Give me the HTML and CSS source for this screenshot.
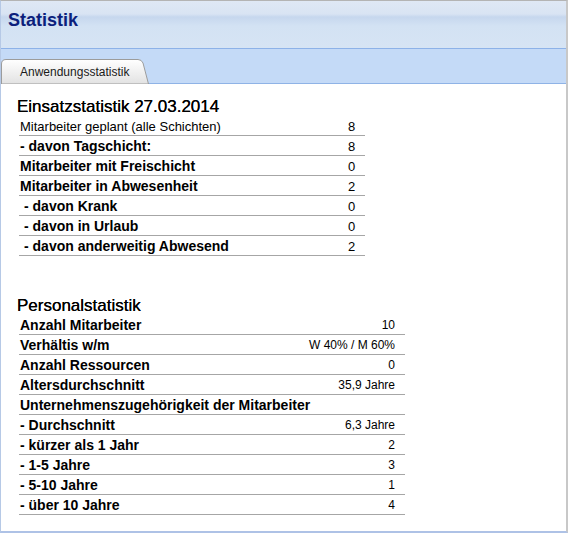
FILE: index.html
```html
<!DOCTYPE html>
<html lang="de">
<head>
  <meta charset="UTF-8">
  <title>Statistik</title>
  <link rel="stylesheet" href="styles.css">
</head>
<body>
  <div class="frame">
    <div class="header">
      <h1 class="title">Statistik</h1>
    </div>
    <div class="tabbar">
      <div class="tab">
        <svg class="tab-shape" width="148" height="25" viewBox="0 0 148 25">
          <defs>
            <linearGradient id="tabfill" x1="0" y1="0" x2="0" y2="1">
              <stop offset="0" stop-color="#ffffff"/>
              <stop offset="1" stop-color="#e2e2e2"/>
            </linearGradient>
          </defs>
          <path d="M0.5,25 L0.5,5 Q0.5,0.5 5,0.5 L137,0.5 Q140.5,0.5 142,4 L147.5,25 Z" fill="url(#tabfill)" stroke="#9c9c9c"/>
        </svg>
        <span class="tab-label">Anwendungsstatistik</span>
      </div>
    </div>
    <div class="content">
      <h2 class="section-title">Einsatzstatistik 27.03.2014</h2>
      <div class="stats stats-small">
        <div class="row"><span class="label plain">Mitarbeiter geplant (alle Schichten)</span><span class="value">8</span></div>
        <div class="row"><span class="label">- davon Tagschicht:</span><span class="value">8</span></div>
        <div class="row"><span class="label">Mitarbeiter mit Freischicht</span><span class="value">0</span></div>
        <div class="row"><span class="label">Mitarbeiter in Abwesenheit</span><span class="value">2</span></div>
        <div class="row"><span class="label indent">- davon Krank</span><span class="value">0</span></div>
        <div class="row"><span class="label indent">- davon in Urlaub</span><span class="value">0</span></div>
        <div class="row"><span class="label indent">- davon anderweitig Abwesend</span><span class="value">2</span></div>
      </div>

      <h2 class="section-title second">Personalstatistik</h2>
      <div class="stats stats-wide">
        <div class="row"><span class="label">Anzahl Mitarbeiter</span><span class="value">10</span></div>
        <div class="row"><span class="label">Verhältis w/m</span><span class="value">W 40% / M 60%</span></div>
        <div class="row"><span class="label">Anzahl Ressourcen</span><span class="value">0</span></div>
        <div class="row"><span class="label">Altersdurchschnitt</span><span class="value">35,9 Jahre</span></div>
        <div class="row"><span class="label">Unternehmenszugehörigkeit der Mitarbeiter</span><span class="value"></span></div>
        <div class="row"><span class="label">- Durchschnitt</span><span class="value">6,3 Jahre</span></div>
        <div class="row"><span class="label">- kürzer als 1 Jahr</span><span class="value">2</span></div>
        <div class="row"><span class="label">- 1-5 Jahre</span><span class="value">3</span></div>
        <div class="row"><span class="label">- 5-10 Jahre</span><span class="value">1</span></div>
        <div class="row"><span class="label">- über 10 Jahre</span><span class="value">4</span></div>
      </div>
    </div>
  </div>
</body>
</html>
```

FILE: styles.css
```css
html, body {
  margin: 0;
  padding: 0;
  background: #fff;
}
body {
  font-family: "Liberation Sans", Arial, sans-serif;
  color: #000;
}
.frame {
  width: 568px;
  height: 533px;
  box-sizing: border-box;
  border-top: 1px solid #b4b4b4;
  border-left: 1px solid #b6c9e6;
  border-right: 2px solid #c8c8c8;
  border-bottom: 2px solid #aec2e6;
  display: flex;
  flex-direction: column;
  overflow: hidden;
}
.header {
  height: 48px;
  flex-shrink: 0;
  box-sizing: border-box;
  padding: 9px 0 0 7px;
  border-bottom: 1px solid #8db2e8;
  background: linear-gradient(#dfe8f5 0, #d9e4f3 13px, #c6d7ee 16px, #d3e2f3 25px, #d6e4f4 100%);
}
.title {
  margin: 0;
  font-size: 18px;
  line-height: 21px;
  font-weight: bold;
  color: #0c1f7c;
}
.tabbar {
  height: 34px;
  flex-shrink: 0;
  border-bottom: 1px solid #8fb3e6;
  background: #c4daf7;
  display: flex;
  align-items: flex-end;
}
.tab {
  position: relative;
  width: 148px;
  height: 25px;
  margin-bottom: -1px;
}
.tab-shape {
  position: absolute;
  left: 0;
  top: 0;
  display: block;
}
.tab-label {
  position: relative;
  display: block;
  padding-left: 19px;
  font-size: 12px;
  line-height: 26px;
  color: #1a1a1a;
}
.content {
  flex: 1;
  padding: 13px 0 0 16px;
}
.section-title {
  margin: 0;
  font-size: 17px;
  line-height: 19px;
  font-weight: normal;
  text-shadow: 0 0 0.4px #000;
}
.section-title.second {
  margin-top: 40px;
}
.stats {
  margin-left: 2px;
}
.stats-small {
  width: 346px;
}
.stats-wide {
  width: 386px;
}
.row {
  display: flex;
  height: 18px;
  padding-top: 1px;
  border-bottom: 1px solid #a6a6a6;
  line-height: 19px;
}
.label {
  flex: 1;
  padding-left: 1px;
  font-size: 14px;
  font-weight: bold;
  white-space: nowrap;
}
.label.plain {
  font-size: 13px;
  font-weight: normal;
}
.label.indent {
  padding-left: 5px;
}
.value {
  font-size: 12px;
  white-space: nowrap;
}
.stats-small .value {
  width: 17px;
  font-size: 13px;
}
.stats-wide .value {
  padding-right: 10px;
  text-align: right;
}
```
